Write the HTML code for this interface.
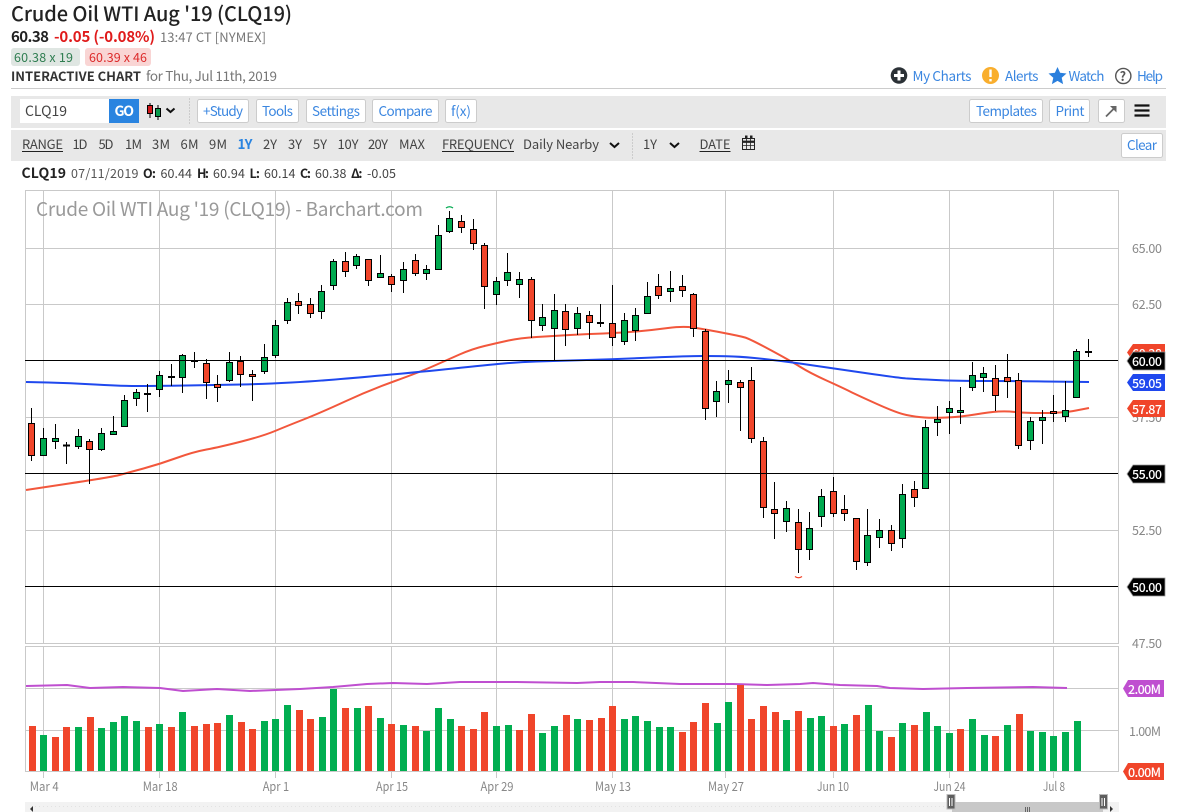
<!DOCTYPE html>
<html><head><meta charset="utf-8"><title>Crude Oil WTI Aug '19 (CLQ19)</title>
<style>
html,body{margin:0;padding:0;background:#fff;width:1178px;height:812px;overflow:hidden}
svg{display:block}
text{font-family:"Noto Sans CJK JP","Liberation Sans",sans-serif;white-space:pre}
.b{font-weight:700}
.btn{fill:#fff;stroke:#ccc}
.l{fill:#3a86e0;font-size:13.5px}
.t{fill:#444;font-size:13px}
.ax{fill:#888;font-size:12.5px}
.tag{fill:#fff;font-size:12.5px;font-weight:500}
</style></head><body>
<svg xmlns="http://www.w3.org/2000/svg" width="1178" height="812" viewBox="0 0 1178 812">
<rect width="1178" height="812" fill="#fff"/>
<!-- header -->
<text x="11" y="21" font-size="20" font-weight="500" fill="#222" textLength="281">Crude Oil WTI Aug '19 (CLQ19)</text>
<text x="11" y="42" font-size="15" class="b" fill="#222" textLength="38">60.38</text>
<text x="54" y="42" font-size="15" class="b" fill="#e01b1b" textLength="101">-0.05 (-0.08%)</text>
<text x="160" y="42" font-size="13" fill="#777" textLength="106">13:47 CT [NYMEX]</text>
<rect x="11" y="48" width="69" height="18" rx="3" fill="#dfe6e2"/>
<text x="14" y="62" font-size="12.5" fill="#2e7d50" textLength="59">60.38 x 19</text>
<rect x="85" y="48" width="66" height="18" rx="3" fill="#f9d5d4"/>
<text x="89" y="62" font-size="12.5" fill="#dc2a2a" textLength="58">60.39 x 46</text>
<text x="11" y="81" font-size="13" class="b" fill="#333" textLength="130">INTERACTIVE CHART</text>
<text x="146" y="81" font-size="13.5" fill="#777" textLength="131">for Thu, Jul 11th, 2019</text>
<!-- top right links -->
<circle cx="899" cy="75.5" r="8.3" fill="#2b3136"/><path d="M899 70.5v10M894 75.500h10" stroke="#fff" stroke-width="3"/>
<text x="912.5" y="81" class="l" textLength="59">My Charts</text>
<circle cx="990.5" cy="75.5" r="8.5" fill="#f9ae2d"/><path d="M990.5 69.5v7.5" stroke="#fff" stroke-width="2.4"/><rect x="989.3" y="79" width="2.4" height="2.4" fill="#fff"/>
<text x="1005" y="81" class="l" textLength="33.5">Alerts</text>
<path d="M1057.5 67l2.6 5.8 6.4.7-4.8 4.3 1.4 6.3-5.6-3.2-5.6 3.2 1.4-6.3-4.8-4.3 6.4-.7z" fill="#2a7fdd"/>
<text x="1068.5" y="81" class="l" textLength="36">Watch</text>
<circle cx="1123.3" cy="76" r="7.6" fill="#fff" stroke="#555" stroke-width="1.4"/>
<text x="1119.6" y="81" font-size="12.5" class="b" fill="#555">?</text>
<text x="1137" y="81" class="l" textLength="26">Help</text>
<path d="M11 88.5H1166" stroke="#ccc"/>
<!-- toolbar 1 -->
<rect x="11" y="96" width="1155" height="32" fill="#e8e8e8"/>
<rect x="20" y="99" width="89" height="24" fill="#fff"/>
<text x="25" y="116" font-size="14" fill="#444" textLength="42">CLQ19</text>
<rect x="109" y="99" width="30" height="24" fill="#2a84e0"/>
<text x="114.5" y="116" font-size="14" class="b" fill="#fff" textLength="19.5">GO</text>
<path d="M150 103v15M158 105v15" stroke="#000"/>
<rect x="147.5" y="105.5" width="5" height="8" fill="#d2191c" stroke="#000"/>
<rect x="155.5" y="108.5" width="5" height="8" fill="#0a9a4c" stroke="#000"/>
<path d="M166.5 108.5l4 3.5 4-3.5" fill="none" stroke="#111" stroke-width="2"/>
<path d="M189.5 98V124" stroke="#ccc" stroke-dasharray="2 1"/>
<rect class="btn" x="197.500" y="99.500" width="51" height="23" rx="2"/>
<text class="l" x="203" y="116" textLength="40">+Study</text>
<rect class="btn" x="256.500" y="99.500" width="42" height="23" rx="2"/>
<text class="l" x="262" y="116" textLength="31">Tools</text>
<rect class="btn" x="306.500" y="99.500" width="59" height="23" rx="2"/>
<text class="l" x="312" y="116" textLength="48">Settings</text>
<rect class="btn" x="372.500" y="99.500" width="66" height="23" rx="2"/>
<text class="l" x="378.500" y="116" textLength="54">Compare</text>
<rect class="btn" x="445.500" y="99.500" width="31" height="23" rx="2"/>
<text class="l" x="451" y="116" textLength="20">f(x)</text>
<rect class="btn" x="969.500" y="99.500" width="73" height="23" rx="2"/>
<text class="l" x="976" y="116" textLength="61">Templates</text>
<rect class="btn" x="1049.500" y="99.500" width="40" height="23" rx="2"/>
<text class="l" x="1055.500" y="116" textLength="29">Print</text>
<rect class="btn" x="1098.500" y="99.500" width="26" height="23" rx="2"/>
<path d="M1106 116.500l9-9" stroke="#666" stroke-width="1.800"/><path d="M1110 106h6.500v6.500z" fill="#666"/>
<path d="M1134.500 105.500h15M1134.500 110.500h15M1134.500 115.500h15" stroke="#111" stroke-width="2.200"/>
<!-- toolbar 2 -->
<rect x="11" y="130" width="1155" height="31" fill="#e8e8e8"/>
<g class="t">
<text class="t" x="22" y="149" textLength="41">RANGE</text><path d="M22 151.500H63" stroke="#222"/>
<text class="t" x="72.500" y="149" textLength="15">1D</text>
<text class="t" x="98.500" y="149" textLength="15">5D</text>
<text class="t" x="125" y="149" textLength="17">1M</text>
<text class="t" x="152" y="149" textLength="18">3M</text>
<text class="t" x="180.500" y="149" textLength="18">6M</text>
<text class="t" x="209" y="149" textLength="18">9M</text>
<text x="237.500" y="149" font-size="13.5" class="b" fill="#2a84e0" textLength="15">1Y</text>
<text class="t" x="263" y="149" textLength="14">2Y</text>
<text class="t" x="288" y="149" textLength="14">3Y</text>
<text class="t" x="313" y="149" textLength="14">5Y</text>
<text class="t" x="337.500" y="149" textLength="21">10Y</text>
<text class="t" x="368" y="149" textLength="20">20Y</text>
<text class="t" x="399" y="149" textLength="26">MAX</text>
<text class="t" x="442" y="149" textLength="72">FREQUENCY</text><path d="M442 151.500H514" stroke="#222"/>
<text class="t" x="523" y="149" textLength="76">Daily Nearby</text>
<path d="M610 143l4.500 4 4.500-4" fill="none" stroke="#111" stroke-width="2"/>
<path d="M632.500 133V159" stroke="#ccc" stroke-dasharray="2 1"/>
<text class="t" x="643" y="149" textLength="14">1Y</text>
<path d="M670 143l4.500 4 4.500-4" fill="none" stroke="#111" stroke-width="2"/>
<text class="t" x="699.500" y="149" textLength="31">DATE</text><path d="M699.500 151.500H730.500" stroke="#222"/>
</g>
<rect x="742.500" y="138.500" width="12" height="11" fill="#e8e8e8" stroke="#222"/>
<path d="M742.500 141h12v1.500h-12zM746.500 139v10M750.500 139v10M743 145.500h11" stroke="#222" stroke-width=".8" fill="#222"/>
<rect x="745" y="135.500" width="2.500" height="3.500" fill="#222"/><rect x="750" y="135.500" width="2.500" height="3.500" fill="#222"/>
<rect class="btn" x="1121.500" y="133.500" width="41" height="24" rx="2"/>
<text class="l" x="1127" y="150" textLength="30">Clear</text>
<!-- info line -->
<text x="21.500" y="178" font-size="14" class="b" fill="#222" textLength="44.500">CLQ19</text>
<text x="71" y="178" font-size="12.500" fill="#555" textLength="67.500">07/11/2019</text>
<text x="143" y="178" font-size="12.500" class="b" fill="#222" textLength="13">O:</text>
<text x="160.500" y="178" font-size="12.500" fill="#444" textLength="31.500">60.44</text>
<text x="197" y="178" font-size="12.500" class="b" fill="#222" textLength="12">H:</text>
<text x="213" y="178" font-size="12.500" fill="#444" textLength="32">60.94</text>
<text x="249.500" y="178" font-size="12.500" class="b" fill="#222" textLength="10.500">L:</text>
<text x="264" y="178" font-size="12.500" fill="#444" textLength="31.500">60.14</text>
<text x="300" y="178" font-size="12.500" class="b" fill="#222" textLength="11">C:</text>
<text x="315" y="178" font-size="12.500" fill="#444" textLength="31.500">60.38</text>
<text x="351" y="178" font-size="12.500" class="b" fill="#222" textLength="11.500">Δ:</text>
<text x="367" y="178" font-size="12.500" fill="#444" textLength="29">-0.05</text>
<!-- grid -->
<path fill="none" stroke="#c9c9c9" d="M25.500 190.500H1118.500V771.500H25.500ZM25.500 248.500H1118.500M25.500 304.500H1118.500M25.500 417.500H1118.500M25.500 530.500H1118.500M25.500 643.500H1118.500M25.500 646.500H1118.500M25.500 688.500H1118.500M25.500 730.500H1118.500"/>
<path fill="none" stroke="#c9c9c9" d="M43.500 190V644M43.500 646V778M159.500 190V644M159.500 646V778M275.500 190V644M275.500 646V778M391.500 190V644M391.500 646V778M496.500 190V644M496.500 646V778M612.500 190V644M612.500 646V778M725.500 190V644M725.500 646V778M833.500 190V644M833.500 646V778M949.500 190V644M949.500 646V778M1053.500 190V644M1053.500 646V778"/>
<rect x="25" y="644" width="1094" height="2" fill="#fff"/>
<path stroke="#c9c9c9" d="M25 643.500H1119M25 646.500H1119"/>
<text x="36" y="216" font-size="19" fill="#999" textLength="387">Crude Oil WTI Aug '19 (CLQ19) - Barchart.com</text>
<!-- moving averages -->
<path fill="none" stroke="#f2573c" stroke-width="2" stroke-linejoin="round" d="M26 490L69 483.500Q112 477 119.500 475Q127 473 143.500 468.500Q160 464 176.500 458Q193 452 206.500 449.500Q220 447 241.500 441.500Q263 436 275 431Q287 426 303.500 419.500Q320 413 345 401.500Q370 390 395 381Q420 372 433.500 366Q447 360 459.500 354.500Q472 349 484.500 346Q497 343 508.500 340.500Q520 338 536.500 337Q553 336 570 335Q587 334 603.500 333.500Q620 333 636.500 331.500Q653 330 668 328Q683 326 693 327.500Q703 329 721.500 332.500Q740 336 745 337.500Q750 339 770 349.750Q790 360.500 800 366.750Q810 373 826.500 380.500Q843 388 850 391.500Q857 395 877 404Q897 413 906.500 415Q916 417 924.500 417.500Q933 418 946.500 417.500Q960 417 975 414.500Q990 412 998.500 411.500Q1007 411 1015 412Q1023 413 1043 413Q1063 413 1076 410.500L1089 408"/>
<path fill="none" stroke="#1f48ee" stroke-width="2" stroke-linejoin="round" d="M26 382L48 382.500Q70 383 95 384.500Q120 386 136.500 386Q153 386 186.500 385.500Q220 385 241.500 384.500Q263 384 291.500 382.500Q320 381 370 376.500Q420 372 453.500 368.500Q487 365 503.500 363.500Q520 362 536.500 361.500Q553 361 586.500 360Q620 359 653.500 357.500Q687 356 703.500 356Q720 356 733.500 356.500Q747 357 768.500 359.500Q790 362 813.500 365.500Q837 369 868.500 373.500Q900 378 907.500 378.500Q915 379 936 380Q957 381 990 381Q1023 381 1045 381.500L1089 382"/>
<path fill="none" stroke="#bf4fd0" stroke-width="2" stroke-linejoin="round" d="M26 686L67 685L90 688L123 687L160 688L183 691L217 689L250 691L300 689L333 687L367 684L393 683L427 684L460 682L517 682L577 683L600 682L633 682L680 684L733 684L767 685L800 684L813 683L840 685L877 686L890 688L923 689L967 688L1033 687L1067 688"/>
<!-- wicks -->
<path fill="none" stroke="#000" d="M31.500 408V461M43.500 428V455M55.500 424V449M66.500 442V464M78.500 429V449M89.500 439V484M101.500 428V451M113.500 416V435M124.500 395V427M136.500 389V406M147.500 384V412M159.500 371V397M171.500 364V386M182.500 354V393M194.500 352V368M206.500 359V399M217.500 375V402M229.500 352V382M240.500 356V387M252.500 370V401M264.500 344V374M275.500 320V358M287.500 298V324M298.500 293V314M310.500 298V318M321.500 285V319M333.500 259V290M345.500 252V277M356.500 254V269M368.500 259V286M380.500 255V278M391.500 274V292M403.500 262V293M415.500 254V276M426.500 265V280M438.500 225V269M449.500 211V233M461.500 215V233M473.500 219V250M484.500 243V309M496.500 277V305M507.500 253V286M519.500 272V298M531.500 277V338M542.500 304V331M554.500 294V360M565.500 304V346M577.500 307V335M589.500 311V339M600.500 304V327M612.500 285V346M624.500 313V345M635.500 308V341M647.500 282V313M658.500 274V299M670.500 271V302M682.500 275V297M693.500 293V337M705.500 329V420M716.500 381V417M728.500 370V403M740.500 380V431M751.500 367V443M763.500 437V518M774.500 482V539M786.500 501V532M798.500 509V573M809.500 512V560M821.500 489V527M833.500 477V517M844.500 495V521M856.500 518V570M867.500 509V566M879.500 519V548M891.500 525V551M902.500 484V548M914.500 481V507M925.500 420V488M937.500 406V436M949.500 401V434M960.500 387V424M972.500 362V391M983.500 367V392M995.500 365V411M1007.500 354V398M1018.500 373V449M1030.500 417V450M1042.500 410V444M1053.500 395V422M1065.500 381V422M1076.500 349V397M1088.500 339V357"/>
<!-- doji -->
<path fill="none" stroke="#000" stroke-width="2" d="M63 445.500h7M144 394h7M168 377h7M191 361h7M597 323h7M1085 352h7"/>
<!-- red bodies -->
<path fill="#f0452a" stroke="#000" d="M28.500 423.500h6V455.500h-6zM86.500 441.500h6V449.500h-6zM203.500 363.500h6V382.500h-6zM214.500 384.500h6V387.500h-6zM237.500 361.500h6V374.500h-6zM249.500 374.500h6V376.500h-6zM295.500 301.500h6V305.500h-6zM307.500 304.500h6V313.500h-6zM342.500 261.500h6V271.500h-6zM365.500 259.500h6V280.500h-6zM388.500 276.500h6V284.500h-6zM412.500 260.500h6V273.500h-6zM458.500 221.500h6V227.500h-6zM470.500 229.500h6V243.500h-6zM481.500 245.500h6V286.500h-6zM528.500 279.500h6V320.500h-6zM562.500 311.500h6V329.500h-6zM586.500 315.500h6V322.500h-6zM609.500 323.500h6V337.500h-6zM655.500 286.500h6V295.500h-6zM679.500 286.500h6V290.500h-6zM690.500 294.500h6V328.500h-6zM702.500 331.500h6V408.500h-6zM737.500 382.500h6V387.500h-6zM748.500 380.500h6V438.500h-6zM760.500 441.500h6V507.500h-6zM771.500 509.500h6V513.500h-6zM795.500 522.500h6V549.500h-6zM830.500 491.500h6V513.500h-6zM841.500 509.500h6V513.500h-6zM853.500 518.500h6V561.500h-6zM888.500 530.500h6V543.500h-6zM911.500 489.500h6V497.500h-6zM992.500 378.500h6V395.500h-6zM1004.500 377.500h6V381.500h-6zM1015.500 380.500h6V445.500h-6zM1050.500 411.500h6V413.500h-6z"/>
<!-- green bodies -->
<path fill="#00a94f" stroke="#000" d="M40.500 438.500h6V455.500h-6zM52.500 438.500h6V441.500h-6zM75.500 436.500h6V446.500h-6zM98.500 433.500h6V449.500h-6zM110.500 431.500h6V434.500h-6zM121.500 400.500h6V426.500h-6zM133.500 392.500h6V398.500h-6zM156.500 375.500h6V389.500h-6zM179.500 355.500h6V377.500h-6zM226.500 362.500h6V380.500h-6zM261.500 357.500h6V371.500h-6zM272.500 325.500h6V355.500h-6zM284.500 302.500h6V320.500h-6zM318.500 291.500h6V311.500h-6zM330.500 261.500h6V285.500h-6zM353.500 256.500h6V265.500h-6zM377.500 273.500h6V277.500h-6zM400.500 269.500h6V280.500h-6zM423.500 269.500h6V273.500h-6zM435.500 235.500h6V269.500h-6zM446.500 218.500h6V231.500h-6zM493.500 281.500h6V294.500h-6zM504.500 272.500h6V280.500h-6zM516.500 279.500h6V284.500h-6zM539.500 317.500h6V325.500h-6zM551.500 310.500h6V328.500h-6zM574.500 313.500h6V328.500h-6zM621.500 320.500h6V341.500h-6zM632.500 315.500h6V330.500h-6zM644.500 296.500h6V313.500h-6zM667.500 288.500h6V291.500h-6zM713.500 391.500h6V401.500h-6zM725.500 380.500h6V384.500h-6zM783.500 508.500h6V521.500h-6zM806.500 528.500h6V549.500h-6zM818.500 496.500h6V516.500h-6zM864.500 535.500h6V562.500h-6zM876.500 530.500h6V537.500h-6zM899.500 494.500h6V538.500h-6zM922.500 427.500h6V488.500h-6zM934.500 419.500h6V422.500h-6zM946.500 408.500h6V412.500h-6zM957.500 410.500h6V412.500h-6zM969.500 375.500h6V387.500h-6zM980.500 373.500h6V377.500h-6zM1027.500 421.500h6V440.500h-6zM1039.500 417.500h6V420.500h-6zM1062.500 410.500h6V416.500h-6zM1073.500 351.500h6V397.500h-6z"/>
<path d="M446 208q3.500-2.500 7 0" fill="none" stroke="#00a94f" stroke-width="1.300"/>
<path d="M795 576.500q3.500 2.500 7 0" fill="none" stroke="#f0452a" stroke-width="1.300"/>
<!-- support lines -->
<path stroke="#000" d="M25 360.500H1118M25 473.500H1118M25 586.500H1118"/>
<!-- volume red -->
<path fill="none" stroke="#f0452a" stroke-width="7" d="M32.500 771V726M55.500 771V737M66.500 771V727M90.500 771V717M148.500 771V727M171.500 771V727M194.500 771V726M206.500 771V724M217.500 771V723M241.500 771V722M252.500 771V729M299.500 771V710M310.500 771V719M345.500 771V708M368.500 771V706M391.500 771V724M415.500 771V726M461.500 771V726M473.500 771V729M484.500 771V712M519.500 771V730M531.500 771V714M566.500 771V715M589.500 771V720M601.500 771V718M612.500 771V706M682.500 771V732M693.500 771V722M705.500 771V703M740.500 771V685M751.500 771V719M763.500 771V706M775.500 771V712M798.500 771V711M833.500 771V726M856.500 771V715M891.500 771V737M914.500 771V725M960.500 771V729M995.500 771V736M1019.500 771V714"/>
<!-- volume green -->
<path fill="none" stroke="#00ae50" stroke-width="7" d="M43.500 771V735M78.500 771V727M101.500 771V728M113.500 771V722M124.500 771V716M136.500 771V721M159.500 771V724M182.500 771V712M229.500 771V715M264.500 771V721M275.500 771V719M287.500 771V705M322.500 771V717M333.500 771V689M357.500 771V708M380.500 771V718M403.500 771V725M426.500 771V731M438.500 771V708M450.500 771V719M496.500 771V726M508.500 771V725M542.500 771V733M554.500 771V726M577.500 771V719M624.500 771V719M635.500 771V716M647.500 771V721M659.500 771V727M670.500 771V727M717.500 771V723M728.500 771V702M786.500 771V720M810.500 771V718M821.500 771V716M844.500 771V724M868.500 771V705M879.500 771V731M902.500 771V723M926.500 771V712M937.500 771V726M949.500 771V733M972.500 771V719M984.500 771V735M1007.500 771V725M1030.500 771V731M1042.500 771V732M1053.500 771V736M1065.500 771V732M1077.500 771V721"/>
<!-- axis labels -->
<text class="ax" x="1132" y="253" textLength="30">65.00</text>
<text class="ax" x="1132" y="309" textLength="30">62.50</text>
<text class="ax" x="1132" y="422" textLength="30">57.50</text>
<text class="ax" x="1132" y="535" textLength="30">52.50</text>
<text class="ax" x="1132" y="648" textLength="30">47.50</text>
<text class="ax" x="1129" y="736" textLength="32">1.00M</text>
<!-- tags -->
<path d="M1127 352.500l6-8.500h32v17h-32z" fill="#f0452a"/><text class="tag" x="1132" y="358" textLength="30">60.38</text>
<path d="M1127 361l6-9h32v18h-32z" fill="#000" stroke="#999" stroke-width=".8"/><text class="tag" x="1132" y="366" textLength="30">60.00</text>
<path d="M1127 382.500l6-8.500h32v17h-32z" fill="#1f48ee"/><text class="tag" x="1132" y="388" textLength="30">59.05</text>
<path d="M1127 408.500l6-8.500h32v17h-32z" fill="#f0452a"/><text class="tag" x="1132" y="414" textLength="30">57.87</text>
<path d="M1127 474l6-9h32v18h-32z" fill="#000" stroke="#999" stroke-width=".8"/><text class="tag" x="1132" y="479" textLength="30">55.00</text>
<path d="M1127 587l6-9h32v18h-32z" fill="#000" stroke="#999" stroke-width=".8"/><text class="tag" x="1132" y="592" textLength="30">50.00</text>
<path d="M1123 688.500l5-8.500h36v17h-36z" fill="#bf4fd0"/><text class="tag" x="1128" y="694" textLength="33">2.00M</text>
<path d="M1123 771.500l5-8.500h36v17h-36z" fill="#f0452a"/><text class="tag" x="1128" y="777" textLength="33">0.00M</text>
<!-- x labels -->
<text class="ax" x="29.700" y="791" textLength="29" lengthAdjust="spacingAndGlyphs">Mar 4</text>
<text class="ax" x="142.700" y="791" textLength="35" lengthAdjust="spacingAndGlyphs">Mar 18</text>
<text class="ax" x="262.700" y="791" textLength="26.500" lengthAdjust="spacingAndGlyphs">Apr 1</text>
<text class="ax" x="376" y="791" textLength="32" lengthAdjust="spacingAndGlyphs">Apr 15</text>
<text class="ax" x="480.500" y="791" textLength="33" lengthAdjust="spacingAndGlyphs">Apr 29</text>
<text class="ax" x="595" y="791" textLength="36" lengthAdjust="spacingAndGlyphs">May 13</text>
<text class="ax" x="708" y="791" textLength="36" lengthAdjust="spacingAndGlyphs">May 27</text>
<text class="ax" x="817" y="791" textLength="32" lengthAdjust="spacingAndGlyphs">Jun 10</text>
<text class="ax" x="933.500" y="791" textLength="32" lengthAdjust="spacingAndGlyphs">Jun 24</text>
<text class="ax" x="1043" y="791" textLength="22" lengthAdjust="spacingAndGlyphs">Jul 8</text>
<!-- scrollbar -->
<rect x="25" y="802" width="1094" height="10" fill="#f2f2f2"/>
<path d="M35 806.500H950" stroke="#e2e2e2" stroke-dasharray="1 3"/>
<rect x="952" y="802" width="151" height="10" fill="#c8c8c8"/>
<path d="M1025.500 807v5M1027.500 807v5M1029.500 807v5" stroke="#666"/>
<rect x="947" y="794.500" width="8" height="14.500" fill="#5e5e5e" stroke="#bbb"/>
<path d="M949.500 798v8M952 798v8" stroke="#fff"/>
<rect x="1099.500" y="794.500" width="8" height="14.500" fill="#5e5e5e" stroke="#bbb"/>
<path d="M1102 798v8M1104.500 798v8" stroke="#fff"/>
<path d="M30 809l3-3v6z" fill="#333"/><path d="M1113 809l-3-3v6z" fill="#333"/>
</svg>
</body></html>
